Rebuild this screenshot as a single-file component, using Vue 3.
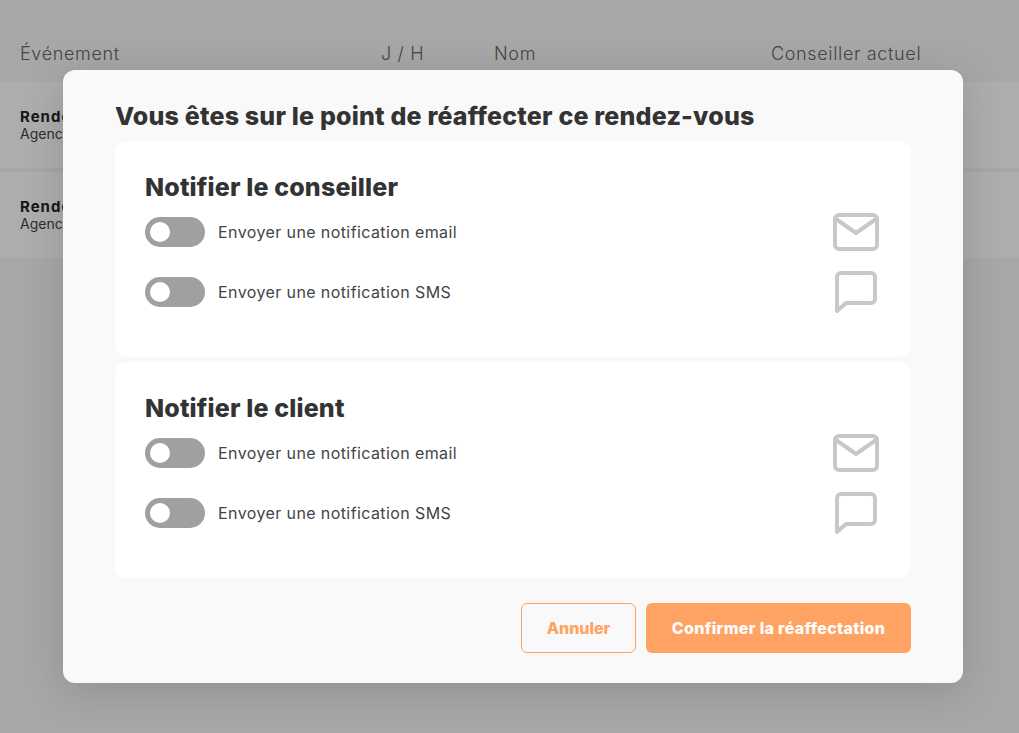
<script setup>
const cols = ['Événement', 'J / H', 'Nom', 'Conseiller actuel']
const rows = [1, 2]
const groups = ['Notifier le conseiller', 'Notifier le client']
</script>

<template>
  <div class="page">
    <div class="table">
      <div class="thead">
        <span v-for="c in cols" :key="c" class="th">{{ c }}</span>
      </div>
      <div v-for="r in rows" :key="r" class="row">
        <strong>Rendez-vous</strong>
        <span>Agence</span>
      </div>
    </div>
    <div class="overlay">
      <div class="modal">
        <h2 class="title">Vous êtes sur le point de réaffecter ce rendez-vous</h2>
        <section v-for="g in groups" :key="g" class="card">
          <h3 class="card-title">{{ g }}</h3>
          <div class="line">
            <span class="toggle"><span class="knob"></span></span>
            <span class="label">Envoyer une notification email</span>
            <svg class="icon" width="46" height="38" viewBox="0 0 46 38" fill="none" stroke="#c8c8c8" stroke-width="4" stroke-linejoin="round" stroke-linecap="round">
              <rect x="2" y="2" width="42" height="34" rx="4" />
              <path d="M3 6 L23 20 L43 6" />
            </svg>
          </div>
          <div class="line">
            <span class="toggle"><span class="knob"></span></span>
            <span class="label">Envoyer une notification SMS</span>
            <svg class="icon sms" width="42" height="42" viewBox="0 0 42 42" fill="none" stroke="#c8c8c8" stroke-width="4" stroke-linejoin="round" stroke-linecap="round">
              <path d="M6 2 H36 A4 4 0 0 1 40 6 V28 A4 4 0 0 1 36 32 H11 L2 40 V6 A4 4 0 0 1 6 2 Z" />
            </svg>
          </div>
        </section>
        <div class="actions">
          <button class="btn ghost">Annuler</button>
          <button class="btn solid">Confirmer la réaffectation</button>
        </div>
      </div>
    </div>
  </div>
</template>

<style scoped>
.page {
  position: relative;
  width: 1019px;
  height: 733px;
  overflow: hidden;
  background: #f7f7f7;
  font-family: Inter, "Liberation Sans", sans-serif;
}
.table {
  padding-top: 42px;
}
.thead {
  display: grid;
  grid-template-columns: 361px 113px 277px 1fr;
  padding: 0 20px;
  height: 40px;
  font-size: 18px;
  line-height: 24px;
  font-weight: 300;
  letter-spacing: 0.65px;
  color: #666;
}
.row {
  display: flex;
  flex-direction: column;
  justify-content: center;
  height: 86px;
  margin-bottom: 4px;
  padding: 0 20px;
  background: #fff;
  color: #444;
  font-size: 14px;
  line-height: 17px;
}
.row strong {
  font-size: 15px;
  letter-spacing: 1px;
  color: #222;
}
.overlay {
  position: absolute;
  inset: 0;
  background: rgba(0, 0, 0, 0.32);
  padding: 70px 0 0 63px;
}
.modal {
  box-sizing: border-box;
  width: 900px;
  height: 613px;
  padding: 29px 52px 0;
  background: #f9f9f9;
  border-radius: 12px;
  box-shadow: 0 8px 40px rgba(0, 0, 0, 0.14);
}
.title {
  margin: 0 0 8px;
  font-size: 25px;
  line-height: 34px;
  font-weight: 800;
  letter-spacing: 0.19px;
  color: #333;
}
.card {
  box-sizing: border-box;
  height: 216px;
  margin-bottom: 5px;
  padding: 31px 30px 0;
  background: #fff;
  border-radius: 12px;
}
.card-title {
  margin: 0 0 14px;
  font-size: 25px;
  line-height: 31px;
  font-weight: 800;
  letter-spacing: 0.15px;
  color: #333;
}
.line {
  display: flex;
  align-items: center;
  height: 30px;
  margin-bottom: 30px;
}
.toggle {
  display: block;
  flex: none;
  width: 60px;
  height: 30px;
  border-radius: 15px;
  background: #a0a0a0;
  padding: 5px;
  box-sizing: border-box;
}
.knob {
  display: block;
  width: 20px;
  height: 20px;
  border-radius: 50%;
  background: #fff;
}
.label {
  margin-left: 13px;
  font-size: 16px;
  line-height: 30px;
  letter-spacing: 0.4px;
  color: #444;
}
.icon {
  margin-left: auto;
  flex: none;
  margin-right: 2px;
}
.sms {
  margin-right: 4px;
}
.actions {
  display: flex;
  justify-content: flex-end;
  gap: 10px;
  margin-top: 25px;
}
.btn {
  height: 50px;
  border-radius: 6px;
  font-family: inherit;
  font-size: 16px;
  font-weight: 800;
}
.ghost {
  width: 115px;
  background: transparent;
  border: 1px solid #ffa364;
  color: #ffa364;
}
.solid {
  width: 265px;
  background: #ffa364;
  border: 0;
  color: #fff;
  letter-spacing: 0.32px;
}
</style>
